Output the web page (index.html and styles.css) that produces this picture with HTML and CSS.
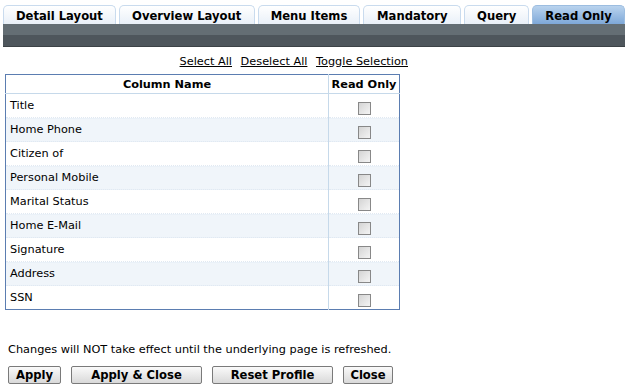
FILE: index.html
```
<!DOCTYPE html>
<html lang="en">
<head>
  <meta charset="UTF-8" />
  <title>Read Only</title>
  <link rel="stylesheet" href="styles.css">
</head>
<body>

  <div class="tabs">
    <div class="tab">Detail Layout</div>
    <div class="tab">Overview Layout</div>
    <div class="tab">Menu Items</div>
    <div class="tab">Mandatory</div>
    <div class="tab">Query</div>
    <div class="tab active">Read Only</div>
  </div>
  <div class="bar"></div>

  <div class="panel">
    <div class="links">
      <a href="#">Select All</a>
      <a href="#">Deselect All</a>
      <a href="#">Toggle Selection</a>
    </div>

    <table class="grid">
      <thead>
        <tr>
          <th class="name">Column Name</th>
          <th class="flag">Read Only</th>
        </tr>
      </thead>
      <tbody>
        <tr><td>Title</td><td class="flag"><input type="checkbox" /></td></tr>
        <tr class="alt"><td>Home Phone</td><td class="flag"><input type="checkbox" /></td></tr>
        <tr><td>Citizen of</td><td class="flag"><input type="checkbox" /></td></tr>
        <tr class="alt"><td>Personal Mobile</td><td class="flag"><input type="checkbox" /></td></tr>
        <tr><td>Marital Status</td><td class="flag"><input type="checkbox" /></td></tr>
        <tr class="alt"><td>Home E-Mail</td><td class="flag"><input type="checkbox" /></td></tr>
        <tr><td>Signature</td><td class="flag"><input type="checkbox" /></td></tr>
        <tr class="alt"><td>Address</td><td class="flag"><input type="checkbox" /></td></tr>
        <tr><td>SSN</td><td class="flag"><input type="checkbox" /></td></tr>
      </tbody>
    </table>

    <p class="note">Changes will NOT take effect until the underlying page is refreshed.</p>

    <div class="actions">
      <button class="btn apply">Apply</button>
      <button class="btn apply-close">Apply &amp; Close</button>
      <button class="btn reset">Reset Profile</button>
      <button class="btn close">Close</button>
    </div>
  </div>

</body>
</html>
```

FILE: styles.css
```
body {
  margin: 0;
  font-family: "DejaVu Sans", Verdana, sans-serif;
  font-size: 11.3px;
  background-color: #fff;
  color: #000;
}

.tabs {
  display: flex;
  gap: 3px;
  padding: 5px 3px 0 3px;
  height: 19px;
}

.tab {
  box-sizing: border-box;
  height: 19px;
  padding: 3px 0 0 0;
  border: 1px solid #c9dbee;
  border-bottom: none;
  border-radius: 5px 5px 0 0;
  background: linear-gradient(#ffffff, #e9f0f8);
  font-weight: bold;
  font-size: 11.6px;
  text-align: center;
  white-space: nowrap;
}

.tab:nth-child(1) { width: 113px; }
.tab:nth-child(2) { width: 136px; }
.tab:nth-child(3) { width: 103px; }
.tab:nth-child(4) { width: 98px; }
.tab:nth-child(5) { width: 65px; }
.tab:nth-child(6) { width: 93px; }

.tab.active {
  border-color: #9cbde0;
  background: linear-gradient(#b9d3ee, #7ea8d8);
}

.bar {
  margin: 0 3px;
  height: 23px;
  background:
    linear-gradient(#646e74 0, #646e74 11px, #4e565c 11px, #4e565c 22px, #3c4246 22px);
}

.panel {
  padding: 0 0 0 5px;
}

.links {
  width: 403px;
  text-align: right;
  margin-top: 8px;
  height: 14px;
}

.links a {
  color: #000;
  text-decoration: underline;
  margin-left: 5px;
}

.grid {
  margin-top: 5px;
  width: 395px;
  border: 1px solid #5b7db1;
  border-collapse: collapse;
}

.grid th {
  height: 18px;
  padding: 0;
  font-weight: bold;
  text-align: center;
  border-bottom: 1px solid #c6d9ea;
}

.grid td {
  height: 23px;
  padding: 0 0 0 4px;
  border-bottom: 1px dotted #e1e9f2;
}

.grid .flag {
  width: 70px;
  text-align: center;
  padding: 0;
  border-left: 1px solid #c6d9ea;
}

.grid tr.alt td {
  background: repeating-linear-gradient(#eaf1f8 0, #eaf1f8 1px, #f6f9fc 1px, #f6f9fc 2px);
}

.grid input[type="checkbox"] {
  appearance: none;
  -webkit-appearance: none;
  box-sizing: border-box;
  width: 13px;
  height: 13px;
  margin: 5px 0 0 0;
  border: 1px solid #888;
  background: linear-gradient(135deg, #d4d4d4, #f4f4f4);
  vertical-align: top;
}

.note {
  margin: 33px 0 0 3px;
  height: 14px;
}

.actions {
  display: flex;
  gap: 10px;
  margin-top: 9px;
  padding-left: 3px;
}

.btn {
  box-sizing: border-box;
  height: 18px;
  padding: 0;
  border: 1px solid #7a7a7a;
  border-radius: 2px;
  background: linear-gradient(#fafafa, #d9d9d9);
  font-family: "DejaVu Sans", Verdana, sans-serif;
  font-size: 11.6px;
  font-weight: bold;
  color: #000;
}

.apply { width: 53px; }
.apply-close { width: 131px; }
.reset { width: 121px; }
.close { width: 50px; }
```
